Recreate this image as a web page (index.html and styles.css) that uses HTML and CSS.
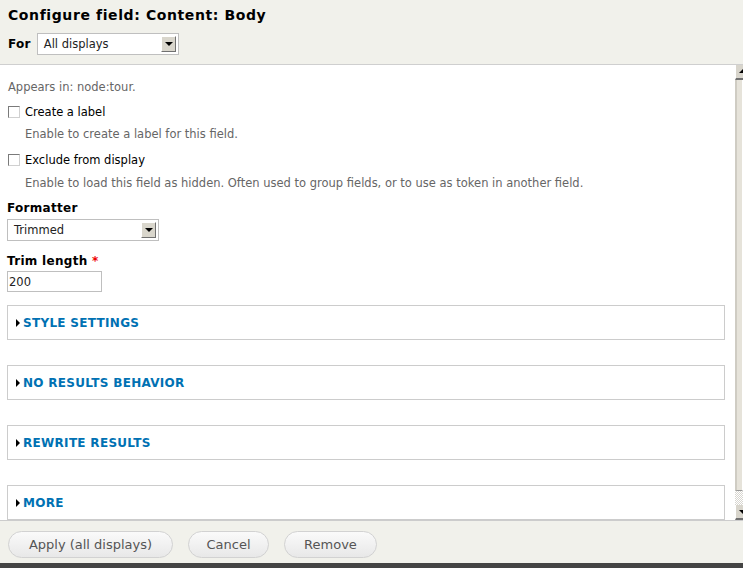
FILE: index.html
```html
<!DOCTYPE html>
<html lang="en">
<head>
  <meta charset="UTF-8">
  <title>Configure field: Content: Body</title>
  <link rel="stylesheet" href="styles.css">
</head>
<body>

  <div class="dialog">
    <div class="head">
      <h1>Configure field: Content: Body</h1>
      <div class="for-row">
        <span class="for-label">For</span>
        <div class="select select-for">
          <span>All displays</span>
          <span class="arrow"></span>
        </div>
      </div>
    </div>

    <div class="main">
      <div class="scroll">
        <p class="appears">Appears in: node:tour.</p>

        <div class="check check-first">
          <span class="box"></span>
          <label>Create a label</label>
        </div>
        <p class="desc">Enable to create a label for this field.</p>

        <div class="check">
          <span class="box"></span>
          <label>Exclude from display</label>
        </div>
        <p class="desc desc-last">Enable to load this field as hidden. Often used to group fields, or to use as token in another field.</p>

        <div class="field field-fmt">
          <div class="field-label">Formatter</div>
          <div class="select select-fmt">
            <span>Trimmed</span>
            <span class="arrow"></span>
          </div>
        </div>

        <div class="field field-trim">
          <div class="field-label">Trim length <span class="req">*</span></div>
          <div class="textbox">200</div>
        </div>

        <div class="fieldset fieldset-first"><span class="tri"></span>STYLE SETTINGS</div>
        <div class="fieldset"><span class="tri"></span>NO RESULTS BEHAVIOR</div>
        <div class="fieldset"><span class="tri"></span>REWRITE RESULTS</div>
        <div class="fieldset"><span class="tri"></span>MORE</div>
      </div>

      <div class="scrollbar">
        <div class="sb-btn sb-up"></div>
        <div class="sb-thumb"></div>
        <div class="sb-track"></div>
        <div class="sb-btn sb-down"></div>
      </div>
    </div>

    <div class="foot">
      <button class="btn btn-apply">Apply (all displays)</button>
      <button class="btn btn-cancel">Cancel</button>
      <button class="btn btn-remove">Remove</button>
    </div>
    <div class="bottom-bar"></div>
  </div>

</body>
</html>
```

FILE: styles.css
```css
body {
  margin: 0;
  font-family: "DejaVu Sans", Verdana, sans-serif;
  background: #f1f1eb;
  color: #000;
}

.dialog {
  width: 743px;
  height: 568px;
  display: flex;
  flex-direction: column;
  overflow: hidden;
}

/* en-tete */
.head {
  height: 65px;
  box-sizing: border-box;
  padding: 6px 8px 0 8px;
  background: #f1f1eb;
  border-bottom: 1px solid #cfcfcf;
}

h1 {
  margin: 0;
  font-size: 14px;
  font-weight: bold;
  letter-spacing: 0.6px;
  line-height: 18px;
}

.for-row {
  display: flex;
  align-items: center;
  gap: 6px;
  margin-top: 9px;
}

.for-label {
  font-size: 12px;
  font-weight: bold;
  letter-spacing: 0.3px;
}

.select {
  display: flex;
  align-items: center;
  justify-content: space-between;
  box-sizing: border-box;
  height: 22px;
  background: #fff;
  border: 1px solid #bfbfbf;
  padding: 0 2px 0 6px;
  font-size: 11.5px;
  color: #222;
}

.select-for {
  width: 142px;
}

.select-fmt {
  width: 152px;
}

.arrow {
  width: 15px;
  height: 16px;
  box-sizing: border-box;
  background: #d9d6cc;
  border: 1px solid;
  border-color: #fff #707070 #707070 #fff;
  position: relative;
}

.arrow::after {
  content: "";
  position: absolute;
  left: 3px;
  top: 5px;
  border-left: 4px solid transparent;
  border-right: 4px solid transparent;
  border-top: 4px solid #000;
}

/* zone principale */
.main {
  height: 455px;
  display: flex;
  background: #fff;
}

.scroll {
  flex: 1;
  overflow: hidden;
  padding: 0 10px 0 7px;
}

.appears {
  margin: 15px 0 0 1px;
  font-size: 11.5px;
  line-height: 14px;
  color: #666;
}

.check {
  display: flex;
  align-items: center;
  gap: 5px;
  margin-top: 12px;
  font-size: 11.5px;
  line-height: 14px;
}

.check-first {
  margin-top: 11px;
}

.box {
  width: 10px;
  height: 10px;
  border: 1px solid;
  border-color: #7a7a7a #d0d0d0 #d0d0d0 #7a7a7a;
  background: #fff;
  margin-left: 1px;
}

.desc {
  margin: 8px 0 0 18px;
  font-size: 11.5px;
  line-height: 14px;
  color: #666;
}

.desc-last {
  margin-top: 9px;
}

.field-fmt {
  margin-top: 10px;
}

.field-trim {
  margin-top: 12px;
}

.field-label {
  font-size: 12px;
  line-height: 16px;
  font-weight: bold;
  margin-bottom: 3px;
  letter-spacing: 0.3px;
}

.field-trim .field-label {
  margin-bottom: 2px;
}

.req {
  color: #e00;
}

.textbox {
  width: 95px;
  height: 21px;
  box-sizing: border-box;
  border: 1px solid #bfbfbf;
  font-size: 11.5px;
  padding: 3px 0 0 1px;
  color: #222;
}

.fieldset {
  display: flex;
  align-items: center;
  height: 35px;
  box-sizing: border-box;
  margin-top: 25px;
  padding-left: 8px;
  border: 1px solid #ccc;
  color: #0071b3;
  font-size: 12px;
  font-weight: bold;
  letter-spacing: 0.3px;
}

.fieldset-first {
  margin-top: 13px;
}

.tri {
  width: 0;
  height: 0;
  border-top: 4px solid transparent;
  border-bottom: 4px solid transparent;
  border-left: 4px solid #000;
  margin-right: 3px;
}

/* barre de defilement */
.scrollbar {
  width: 8px;
  display: flex;
  flex-direction: column;
  background: #fff;
}

.sb-btn {
  height: 15px;
  box-sizing: border-box;
  background: #d8d5cc;
  border-left: 1px solid #fff;
  border-bottom: 2px solid #707070;
  position: relative;
}

.sb-up::after {
  content: "";
  position: absolute;
  left: 3px;
  top: 4px;
  border-left: 4px solid transparent;
  border-bottom: 4px solid #000;
}

.sb-down::after {
  content: "";
  position: absolute;
  left: 3px;
  top: 5px;
  border-left: 4px solid transparent;
  border-top: 4px solid #000;
}

.sb-thumb {
  height: 410px;
  background: #e6e3da;
  border-left: 2px solid #cfccc3;
  border-right: 1px solid #fff;
  border-bottom: 1px solid #999;
}

.sb-track {
  flex: 1;
  background: repeating-conic-gradient(#d8d6d0 0 25%, #fff 0 50%) 0 0 / 2px 2px;
}

/* pied */
.foot {
  flex: 1;
  display: flex;
  align-items: center;
  gap: 15px;
  padding-left: 8px;
  border-top: 1px solid #ccc;
  background: #f1f1eb;
}

.btn {
  height: 27px;
  border: 1px solid #d2d2d2;
  border-radius: 14px;
  background: linear-gradient(#fafafa, #e8e8e8);
  font-family: "DejaVu Sans", Verdana, sans-serif;
  font-size: 13px;
  color: #555;
  padding: 0;
  margin-top: 4px;
}

.btn-apply { width: 165px; }
.btn-cancel { width: 81px; }
.btn-remove { width: 93px; }

.bottom-bar {
  height: 5px;
  background: #444;
}
```
